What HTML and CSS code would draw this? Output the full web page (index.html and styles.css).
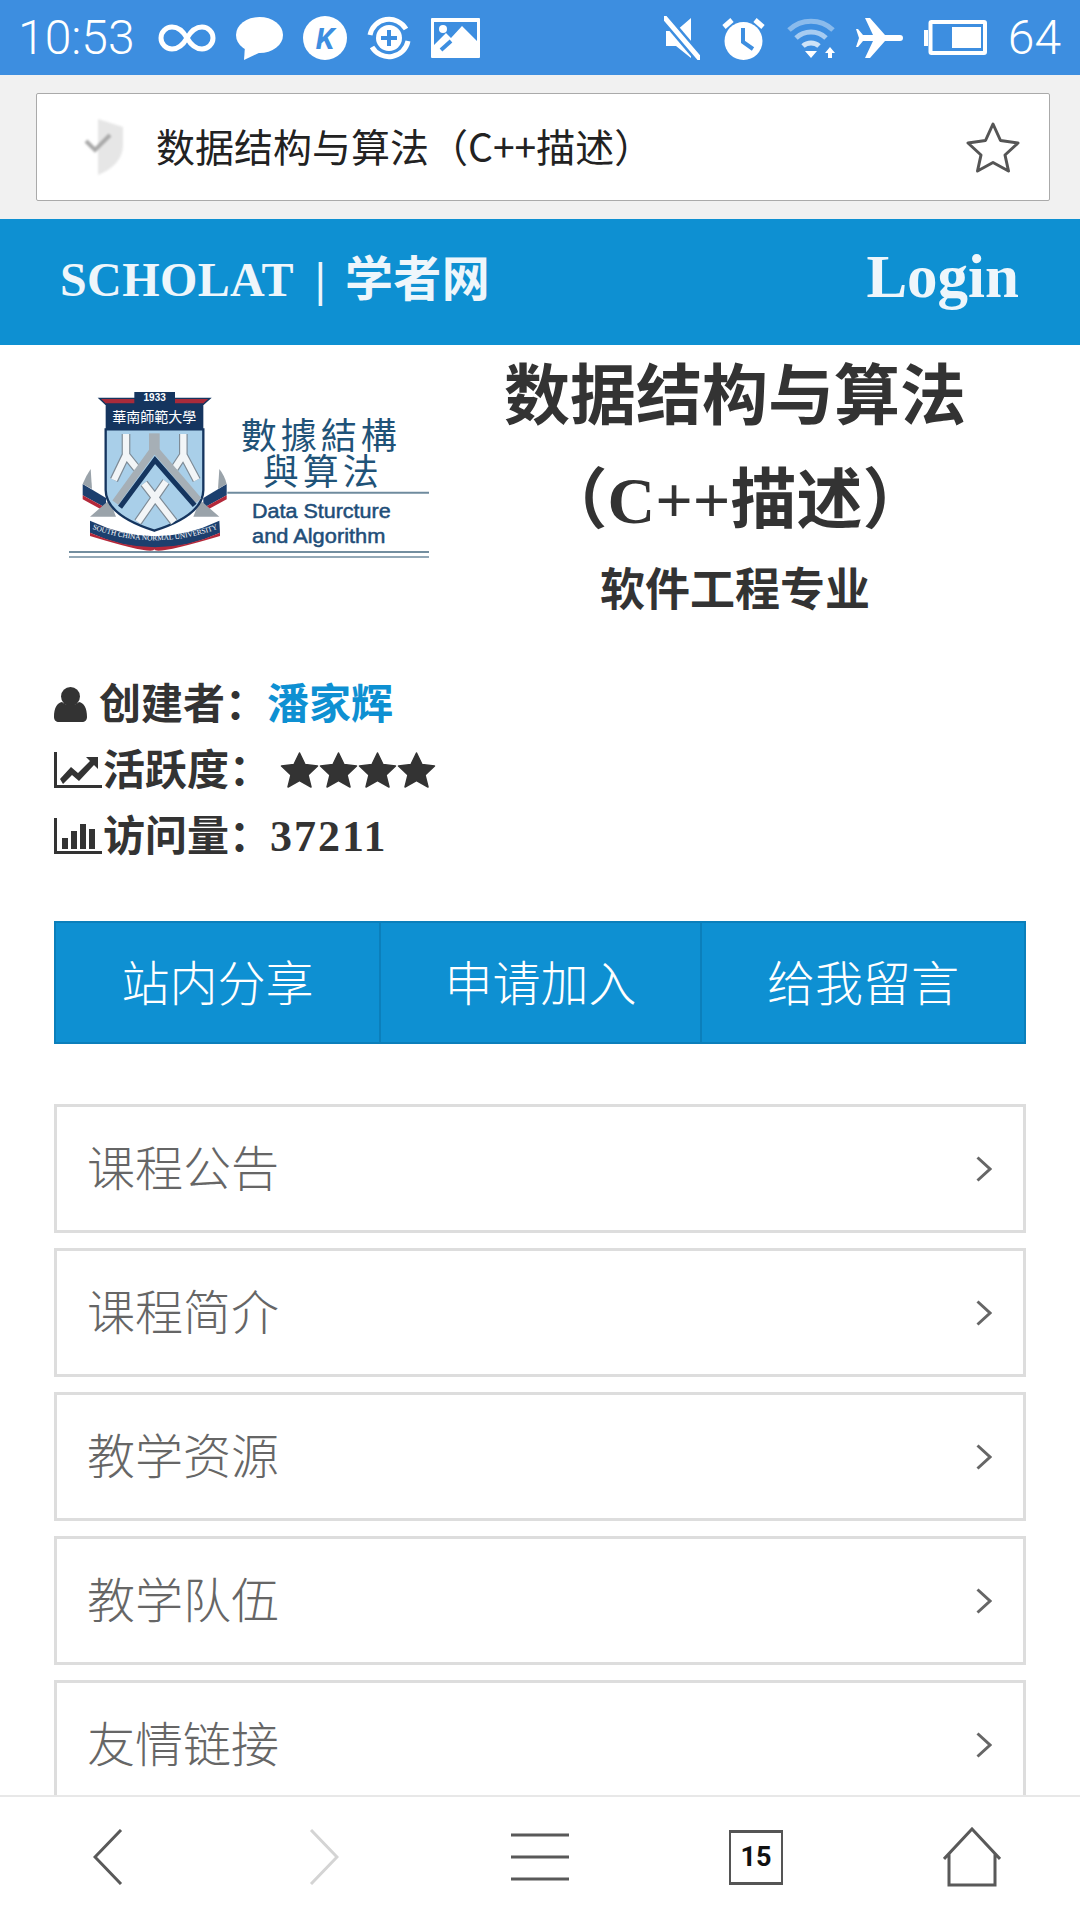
FILE: index.html
```html
<!DOCTYPE html>
<html lang="zh-CN">
<head>
    <meta charset="UTF-8">
    <meta name="viewport" content="width=device-width, initial-scale=1.0">
    <title>数据结构与算法（C++描述）</title>
    <link rel="stylesheet" href="styles.css">
</head>
<body>
    <div class="status-bar">
        <div class="status-group">
            <span class="status-text status-time">10:53</span>
            <svg width="58" height="44" viewBox="0 0 58 44"><path class="ico-line" d="M29 22C25 15 20 11 14 11a11 11 0 0 0 0 22c6 0 11-4 15-11s9-11 15-11a11 11 0 0 1 0 22c-6 0-11-4-15-11z"/></svg>
            <svg width="47" height="44" viewBox="0 0 47 44"><ellipse class="ico-fill" cx="23.5" cy="19" rx="23.5" ry="18"/><path class="ico-fill" d="M9 30l-1 14 17-8z"/></svg>
            <svg width="44" height="44" viewBox="0 0 44 44"><circle class="ico-fill" cx="22" cy="22" r="22"/><text class="ico-k" x="22" y="33">K</text></svg>
            <svg width="44" height="44" viewBox="0 0 44 44"><circle class="ico-fill" cx="22" cy="22" r="13"/><path class="ico-cut" d="M22 14v16M14 22h16"/><path class="ico-line" d="M3 19A19.500 19.500 0 0 1 39 13M41 25A19.500 19.500 0 0 1 5 31"/></svg>
            <svg width="49" height="40" viewBox="0 0 49 40"><rect class="ico-fill" width="49" height="40" rx="1"/><path class="ico-blue" d="M3 4h43v19L31 8 20 20l-5-5L3 27z"/><circle class="ico-fill" cx="12" cy="11" r="4"/><path class="ico-cut" d="M10 32l10-9"/></svg>
        </div>
        <div class="status-group status-right">
            <svg width="36" height="44" viewBox="0 0 36 44"><path class="ico-fill" d="M2 15h10L27 2v40L12 30H2z"/><path class="ico-cut-wide" d="M1 2l34 40"/><path class="ico-line-thin" d="M1 2l34 40"/></svg>
            <svg width="45" height="44" viewBox="0 0 45 44"><circle class="ico-fill" cx="22.500" cy="25" r="19"/><path class="ico-cut" d="M22 12v14l10 7"/><path class="ico-line" d="M3 11l8-7M42 11l-8-7"/></svg>
            <svg width="48" height="40" viewBox="0 0 48 40"><path class="ico-line ico-dim" d="M2 12A32 32 0 0 1 46 12"/><path class="ico-line ico-mid" d="M9 20A22 22 0 0 1 39 20"/><path class="ico-line ico-soft" d="M16 28A12 12 0 0 1 32 28"/><path class="ico-fill" d="M18 33h12l-6 7zM43 29l5 6h-3v5h-4v-5h-3z"/></svg>
            <svg width="47" height="40" viewBox="0 0 47 40"><path class="ico-fill" d="M44 17H29L14 0H9l8 17H7L2 11H0l3 9-3 9h2l5-6h10L9 40h5l15-17h15a3 3 0 0 0 0-6z"/></svg>
            <svg width="63" height="35" viewBox="0 0 63 35"><path class="ico-fill" d="M0 10h4v16H0z"/><rect class="ico-frame" x="6.500" y="2" width="54.500" height="31" rx="1"/><path class="ico-fill" d="M28 7h29v21H28z"/></svg>
            <span class="status-text">64</span>
        </div>
    </div>

    <div class="address-area">
        <div class="address-field">
            <svg class="shield" width="40" height="60" viewBox="0 0 40 60"><path d="M14 2l25 8v18c0 14-10 24-25 30z" fill="#e6e6e6"/><path d="M2 24l9 9 15-15" fill="none" stroke="#a9a9a9" stroke-width="4"/></svg>
            <span class="address-text">数据结构与算法（C++描述）</span>
            <svg width="54" height="52" viewBox="0 0 54 52"><path d="M27 3l7.500 16.500L52 22 39 34l3.500 16L27 41.500 11.500 50 15 34 2 22l17.500-2.500z" fill="none" stroke="#555" stroke-width="3" stroke-linejoin="round"/></svg>
        </div>
    </div>

    <div class="page">
        <div class="site-header">
            <div class="site-name">SCHOLAT<span class="site-sep">|</span>学者网</div>
            <a class="login" href="#">Login</a>
        </div>

        <div class="hero">
            <svg class="logo" width="420" height="200" viewBox="0 0 1260 600">
                <!-- ribbon ends -->
                <path d="M128 342l70 42v30l-70-38z" fill="#1c3f6e"/>
                <path d="M128 376l70 38v12l-70-38z" fill="#b3283a"/>
                <path d="M128 342q10-25 24-45l4 60z" fill="#9aa3aa"/>
                <path d="M560 342l-70 42v30l70-38z" fill="#1c3f6e"/>
                <path d="M560 376l-70 38v12l70-38z" fill="#b3283a"/>
                <path d="M560 342q-6-25-22-45l-4 60z" fill="#9aa3aa"/>
                <path d="M150 440l58-50 20 50zM538 440l-58-50-20 50z" fill="#9aa3aa"/>
                <!-- shield -->
                <path d="M197 178H490V360Q490 435 343 482Q197 435 197 360Z" fill="#a9cfe9" stroke="#15355f" stroke-width="7"/>
                <path d="M178 85H510L490 103H197Z" fill="#a82b3b" stroke="#15355f" stroke-width="4"/>
                <rect x="197" y="100" width="293" height="78" fill="#15355f"/>
                <rect x="283" y="66" width="122" height="36" fill="#15355f"/>
                <text class="logo-year" x="344" y="94">1933</text>
                <text class="logo-school" x="343" y="156">華南師範大學</text>
                <!-- tools inside the shield -->
                <path d="M258 192V255L222 330M258 255L290 295" fill="none" stroke="#7e8b96" stroke-width="26"/>
                <path d="M258 192V255L222 330M258 255L290 295" fill="none" stroke="#f2f5f7" stroke-width="19"/>
                <path d="M430 192V255L470 330M430 255L404 295" fill="none" stroke="#7e8b96" stroke-width="26"/>
                <path d="M430 192V255L470 330M430 255L404 295" fill="none" stroke="#f2f5f7" stroke-width="19"/>
                <path d="M226 398L343 236 476 392" fill="none" stroke="#a6afb6" stroke-width="22"/>
                <path d="M343 190V240" stroke="#a6afb6" stroke-width="32"/>
                <path d="M240 412L345 270 464 406" fill="none" stroke="#15355f" stroke-width="15"/>
                <path d="M312 340L402 456M378 335L294 456" fill="none" stroke="#7e8b96" stroke-width="26"/>
                <path d="M312 340L402 456M378 335L294 456" fill="none" stroke="#f2f5f7" stroke-width="19"/>
                <!-- bottom banner -->
                <path d="M150 452Q345 545 538 452L540 488Q345 580 150 488Z" fill="#1c3f6e"/>
                <path d="M150 488Q345 575 540 488L540 498Q345 556 343 538Q340 556 150 498Z" fill="#b3283a"/>
                <path id="banner-curve" d="M140 470Q345 552 550 470" fill="none"/>
                <text class="logo-banner"><textPath href="#banner-curve" startOffset="50%">SOUTH CHINA NORMAL UNIVERSITY</textPath></text>
                <!-- course name -->
                <text class="logo-cn" x="842" y="236">數據結構</text>
                <text class="logo-cn" x="848" y="344">與算法</text>
                <path d="M562 368H1167" stroke="#6f8b9e" stroke-width="6"/>
                <text class="logo-en" x="636" y="445" textLength="416" lengthAdjust="spacingAndGlyphs">Data Sturcture</text>
                <text class="logo-en" x="636" y="520" textLength="400" lengthAdjust="spacingAndGlyphs">and Algorithm</text>
                <path d="M87 546H1167" stroke="#44687f" stroke-width="5"/>
                <path d="M87 561H1167" stroke="#6f8b9e" stroke-width="4"/>
            </svg>
            <div class="hero-title">
                <h1>数据结构与算法<br>（C++描述）</h1>
                <div class="hero-sub">软件工程专业</div>
            </div>
        </div>

        <div class="info">
            <div class="info-row">
                <svg class="icon-user" width="33" height="35" viewBox="0 0 33 35"><circle cx="16.500" cy="9.500" r="9.500"/><path d="M0 30c0-9 3-14 8-15 2 2 5 3 8.500 3s6.500-1 8.500-3c5 1 8 6 8 15 0 3-2 5-5 5H5c-3 0-5-2-5-5z"/></svg>
                <span class="info-label">创建者：</span><a class="info-label info-link" href="#">潘家辉</a>
            </div>
            <div class="info-row">
                <svg class="icon-chart" width="48" height="36" viewBox="0 0 48 36"><path d="M0 0h3v33h45v3H0z"/><path d="M6 27l11-12 7 6 12-12-4-4h12v12l-4-4-15 16-7-6-9 9z"/></svg>
                <span class="info-label">活跃度：</span>
                <span class="stars">
                    <svg width="39" height="38" viewBox="0 0 39 38"><path class="star" d="M19.500 2L25 13.500l12.500 1.500-9.500 9 3 12-11.500-6.500L8 36l3-12-9.500-9L14 13.500z"/></svg>
                    <svg width="39" height="38" viewBox="0 0 39 38"><path class="star" d="M19.500 2L25 13.500l12.500 1.500-9.500 9 3 12-11.500-6.500L8 36l3-12-9.500-9L14 13.500z"/></svg>
                    <svg width="39" height="38" viewBox="0 0 39 38"><path class="star" d="M19.500 2L25 13.500l12.500 1.500-9.500 9 3 12-11.500-6.500L8 36l3-12-9.500-9L14 13.500z"/></svg>
                    <svg width="39" height="38" viewBox="0 0 39 38"><path class="star" d="M19.500 2L25 13.500l12.500 1.500-9.500 9 3 12-11.500-6.500L8 36l3-12-9.500-9L14 13.500z"/></svg>
                </span>
            </div>
            <div class="info-row">
                <svg class="icon-chart" width="48" height="36" viewBox="0 0 48 36"><path d="M0 0h3v33h45v3H0z"/><path d="M8 20h6v11H8zM17 13h6v18h-6zM26 6h6v25h-6zM35 11h6v20h-6z"/></svg>
                <span class="info-label">访问量：</span><span class="info-num">37211</span>
            </div>
        </div>

        <div class="actions">
            <a class="action-btn" href="#">站内分享</a>
            <a class="action-btn" href="#">申请加入</a>
            <a class="action-btn" href="#">给我留言</a>
        </div>

        <div class="menu-list">
            <a class="menu-item" href="#">课程公告<svg width="16" height="26" viewBox="0 0 16 26"><path d="M1.500 1.500L14 13 1.500 24.500"/></svg></a>
            <a class="menu-item" href="#">课程简介<svg width="16" height="26" viewBox="0 0 16 26"><path d="M1.500 1.500L14 13 1.500 24.500"/></svg></a>
            <a class="menu-item" href="#">教学资源<svg width="16" height="26" viewBox="0 0 16 26"><path d="M1.500 1.500L14 13 1.500 24.500"/></svg></a>
            <a class="menu-item" href="#">教学队伍<svg width="16" height="26" viewBox="0 0 16 26"><path d="M1.500 1.500L14 13 1.500 24.500"/></svg></a>
            <a class="menu-item" href="#">友情链接<svg width="16" height="26" viewBox="0 0 16 26"><path d="M1.500 1.500L14 13 1.500 24.500"/></svg></a>
        </div>
    </div>

    <div class="bottom-bar">
        <svg width="30" height="56" viewBox="0 0 30 56"><path class="nav-line" d="M28 1L2 28l26 27"/></svg>
        <svg width="30" height="56" viewBox="0 0 30 56"><path class="nav-line nav-off" d="M2 1l26 27L2 55"/></svg>
        <svg width="58" height="48" viewBox="0 0 58 48"><path class="nav-line" d="M0 2h58M0 24h58M0 46h58"/></svg>
        <div class="tab-count">15</div>
        <svg width="58" height="60" viewBox="0 0 58 60"><path class="nav-line" d="M1 32L29 2l28 30M6 26v32h46V26"/></svg>
    </div>
</body>
</html>
```

FILE: styles.css
```css
html, body {
    margin: 0;
    padding: 0;
}

body {
    width: 1080px;
    height: 1920px;
    overflow: hidden;
    display: flex;
    flex-direction: column;
    background-color: white;
    font-family: "Noto Sans CJK SC", "Noto Sans", sans-serif;
    color: #333333;
}

a {
    text-decoration: none;
}

svg {
    display: block;
    flex-shrink: 0;
}

/* status bar */
.status-bar {
    height: 75px;
    flex-shrink: 0;
    display: flex;
    justify-content: space-between;
    align-items: center;
    padding: 0 19px 0 18px;
    background-color: #3d8ee0;
    color: white;
}

.status-group {
    display: flex;
    align-items: center;
    gap: 20px;
}

.status-right {
    gap: 21px;
}

.status-text {
    font-family: Roboto, sans-serif;
    font-weight: 300;
    font-size: 48px;
    line-height: 75px;
}

.status-time {
    margin-right: 3px;
}

.ico-fill {
    fill: white;
}

.ico-blue {
    fill: #3d8ee0;
}

.ico-line {
    fill: none;
    stroke: white;
    stroke-width: 5;
}

.ico-line-thin {
    fill: none;
    stroke: white;
    stroke-width: 5;
    stroke-linecap: round;
}

.ico-cut {
    fill: none;
    stroke: #3d8ee0;
    stroke-width: 4;
}

.ico-cut-wide {
    fill: none;
    stroke: #3d8ee0;
    stroke-width: 10;
}

.ico-frame {
    fill: none;
    stroke: white;
    stroke-width: 4;
}

.ico-dim {
    opacity: 0.4;
}

.ico-mid {
    opacity: 0.55;
}

.ico-soft {
    opacity: 0.75;
}

.ico-k {
    fill: #3d8ee0;
    font-family: Roboto, sans-serif;
    font-weight: 700;
    font-style: italic;
    font-size: 30px;
    text-anchor: middle;
}

/* address bar */
.address-area {
    height: 144px;
    flex-shrink: 0;
    box-sizing: border-box;
    padding: 18px 30px 18px 36px;
    background-color: #f1f1f1;
}

.address-field {
    height: 108px;
    box-sizing: border-box;
    display: flex;
    align-items: center;
    padding: 0 29px 0 47px;
    background-color: white;
    border: 1px solid #aaaaaa;
    border-radius: 2px;
}

.shield {
    filter: blur(1px);
    margin-right: 32px;
}

.address-text {
    flex: 1;
    padding-bottom: 4px;
    font-size: 39px;
    color: #222222;
}

/* site header */
.page {
    flex: 1;
    min-height: 0;
    overflow: hidden;
}

.site-header {
    height: 126px;
    display: flex;
    justify-content: space-between;
    align-items: center;
    padding: 0 61px 0 60px;
    background-color: #0e90d2;
    color: #eef6fb;
    font-family: "Liberation Serif", "Noto Sans CJK SC", serif;
    font-weight: 700;
}

.site-name {
    padding-bottom: 14px;
    font-size: 48px;
    letter-spacing: 0.4px;
}

.site-sep {
    margin: 0 19px 0 21px;
}

.login {
    padding-bottom: 10px;
    color: #eef6fb;
    font-size: 61px;
}

/* course title */
.hero {
    display: flex;
    height: 326px;
}

.logo {
    margin: 25px 0 0 40px;
}

.hero-title {
    width: 590px;
    margin-left: -20px;
    text-align: center;
    font-family: "Liberation Serif", "Noto Sans CJK SC", serif;
    font-weight: 700;
}

.hero-title h1 {
    margin: 0;
    font-size: 66px;
    line-height: 104px;
}

.hero-sub {
    padding-top: 2px;
    font-size: 45px;
    line-height: 72px;
}

.logo-year {
    fill: white;
    font-family: "Liberation Sans", sans-serif;
    font-weight: 700;
    font-size: 30px;
    text-anchor: middle;
}

.logo-school {
    fill: white;
    font-family: "Noto Sans CJK TC", sans-serif;
    font-size: 42px;
    text-anchor: middle;
}

.logo-banner {
    fill: white;
    font-family: "Liberation Serif", serif;
    font-size: 22px;
    text-anchor: middle;
}

.logo-cn {
    fill: #1f5378;
    font-family: "Noto Sans CJK TC", sans-serif;
    font-size: 108px;
    letter-spacing: 12px;
    text-anchor: middle;
}

.logo-en {
    fill: #1f4e79;
    stroke: #1f4e79;
    stroke-width: 1.500;
    font-family: "Liberation Sans", sans-serif;
    font-size: 60px;
}

/* creator, activity, visits */
.info {
    padding: 0 54px;
    font-size: 42px;
    font-weight: 700;
}

.info-row {
    height: 66px;
    display: flex;
    align-items: center;
}

.info-row svg {
    fill: #333333;
}

.info-label {
    padding-bottom: 7px;
}

.icon-user {
    margin-right: 12px;
}

.icon-chart {
    margin-right: 1px;
}

.info-link {
    color: #0e90d2;
}

.stars {
    display: flex;
    margin-left: 9px;
}

.star {
    stroke: #333333;
    stroke-width: 1.500;
    stroke-linejoin: round;
}

.info-num {
    margin-left: -1px;
    font-family: "Liberation Serif", serif;
    font-size: 44px;
    letter-spacing: 2px;
}

/* three blue buttons */
.actions {
    display: grid;
    grid-template-columns: 323px 321px 1fr;
    margin: 52px 54px 0;
    height: 123px;
    box-sizing: border-box;
    background-color: #0e90d2;
    border: 2px solid #0b7fbb;
}

.action-btn {
    display: flex;
    justify-content: center;
    align-items: center;
    padding-bottom: 6px;
    color: white;
    font-size: 48px;
    font-weight: 300;
    border-left: 2px solid #0b7fbb;
}

.action-btn:first-child {
    border-left: none;
}

/* course menu */
.menu-list {
    display: flex;
    flex-direction: column;
    gap: 15px;
    margin: 60px 54px 0;
}

.menu-item {
    height: 129px;
    flex-shrink: 0;
    box-sizing: border-box;
    display: flex;
    justify-content: space-between;
    align-items: center;
    padding: 0 31px 7px 30px;
    background-color: white;
    border: 3px solid #dddddd;
    color: #666666;
    font-size: 48px;
    font-weight: 300;
}

.menu-item svg {
    margin-top: 7px;
    fill: none;
    stroke: #666666;
    stroke-width: 3;
}

/* browser toolbar */
.bottom-bar {
    height: 125px;
    flex-shrink: 0;
    box-sizing: border-box;
    display: grid;
    grid-template-columns: repeat(5, 216px);
    justify-items: center;
    align-items: center;
    padding-bottom: 3px;
    background-color: white;
    border-top: 2px solid #e8e8e8;
}

.nav-line {
    fill: none;
    stroke: #595959;
    stroke-width: 3;
}

.nav-off {
    stroke: #d4d4d4;
}

.tab-count {
    width: 54px;
    height: 55px;
    box-sizing: border-box;
    display: flex;
    justify-content: center;
    align-items: center;
    border: 2px solid #555555;
    border-top-width: 3px;
    border-bottom-width: 3px;
    font-family: Roboto, sans-serif;
    font-weight: 700;
    font-size: 27px;
    color: #111111;
}
```
